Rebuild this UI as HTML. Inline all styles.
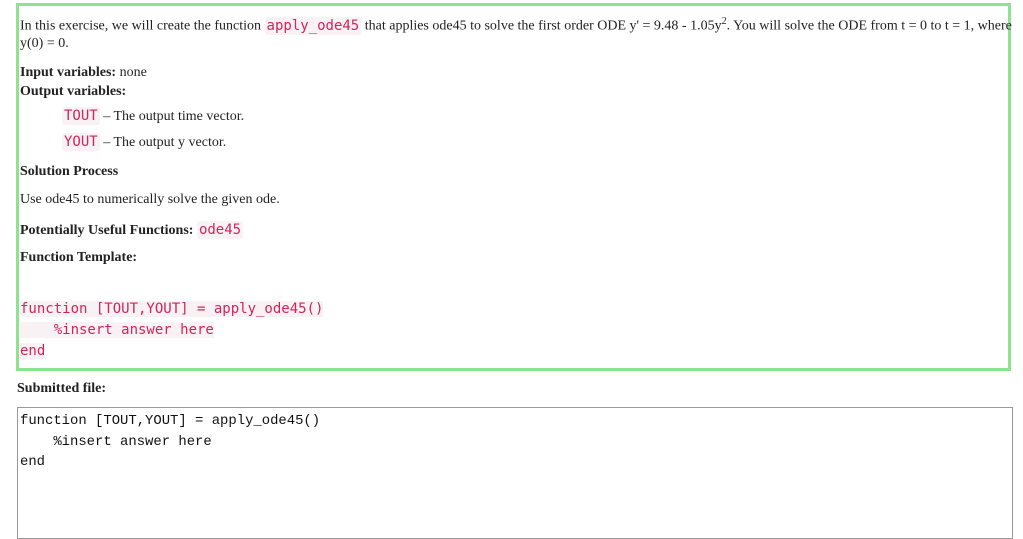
<!DOCTYPE html>
<html><head><style>
html,body{margin:0;background:#fff;font-family:"Liberation Serif",serif;font-size:14px;color:#222;overflow:hidden;width:1023px;height:524px;}
.box{position:absolute;left:16px;top:3px;width:989px;height:362px;border:3px solid #8fe28f;}
.t{position:absolute;left:20px;white-space:nowrap;}
code{font-family:"DejaVu Sans Mono","Liberation Mono",monospace;color:#d4235a;background:#f8f2f4;font-size:14px;padding:1px 2px;border-radius:3px;}
.pre{position:absolute;left:20px;font-family:"DejaVu Sans Mono",monospace;font-size:14px;color:#d4235a;line-height:21px;}
.pre span{background:#f8f2f4;}
.sub{position:absolute;left:17px;top:407px;width:994px;height:130px;border:1px solid #999;}
.pre2{position:absolute;left:20px;top:411px;font-family:"Liberation Mono",monospace;font-size:13.9px;color:#111;line-height:20.5px;white-space:pre;}
</style></head><body>
<div class="box"></div>
<div class="t" style="top:16px">In this exercise, we will create the function <code>apply_ode45</code> that applies ode45 to solve the first order ODE y' = 9.48 - 1.05y<sup style="font-size:10px">2</sup>. You will solve the ODE from t = 0 to t = 1, where</div>
<div class="t" style="top:36px">y(0) = 0.</div>
<div class="t" style="top:65px"><b>Input variables:</b> none</div>
<div class="t" style="top:84px"><b>Output variables:</b></div>
<div class="t" style="top:108px;left:62px"><code>TOUT</code> – The output time vector.</div>
<div class="t" style="top:134px;left:62px"><code>YOUT</code> – The output y vector.</div>
<div class="t" style="top:164px"><b>Solution Process</b></div>
<div class="t" style="top:192px">Use ode45 to numerically solve the given ode.</div>
<div class="t" style="top:222px"><b>Potentially Useful Functions:</b> <code>ode45</code></div>
<div class="t" style="top:250px"><b>Function Template:</b></div>
<div class="pre" style="top:299px;white-space:pre"><span>function [TOUT,YOUT] = apply_ode45()</span>
<span>    %insert answer here</span>
<span>end</span></div>
<div class="t" style="top:381px;left:17px"><b>Submitted file:</b></div>
<div class="sub"></div>
<div class="pre2">function [TOUT,YOUT] = apply_ode45()
    %insert answer here
end</div>
</body></html>
